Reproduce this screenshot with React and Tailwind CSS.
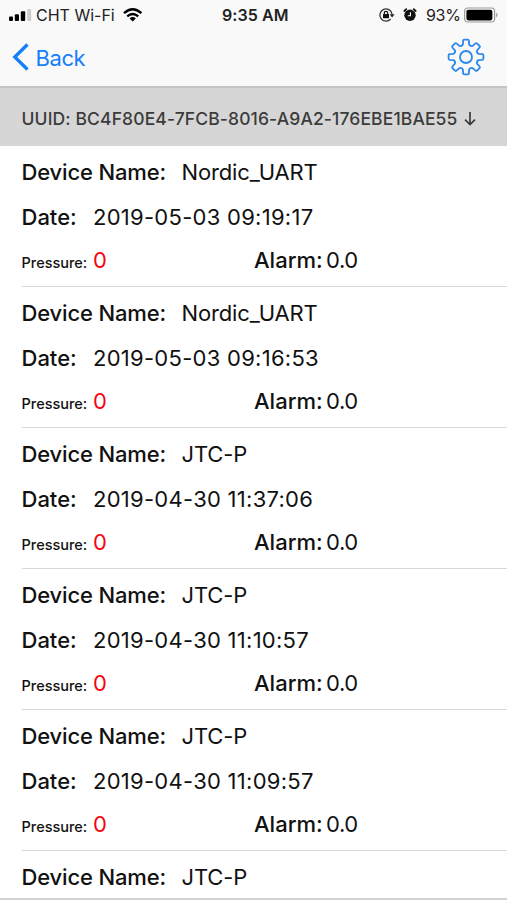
const records = [
  { id: 1, name: 'Nordic_UART', date: '2019-05-03 09:19:17', pressure: '0', alarm: '0.0' },
  { id: 2, name: 'Nordic_UART', date: '2019-05-03 09:16:53', pressure: '0', alarm: '0.0' },
  { id: 3, name: 'JTC-P', date: '2019-04-30 11:37:06', pressure: '0', alarm: '0.0' },
  { id: 4, name: 'JTC-P', date: '2019-04-30 11:10:57', pressure: '0', alarm: '0.0' },
  { id: 5, name: 'JTC-P', date: '2019-04-30 11:09:57', pressure: '0', alarm: '0.0' },
];

// Outline of an eight-toothed cog centred on the origin.
function cogPath() {
  const point = (r, deg) => {
    const a = (deg * Math.PI) / 180;
    return `${(r * Math.sin(a)).toFixed(2)} ${(-r * Math.cos(a)).toFixed(2)}`;
  };
  let d = '';
  for (let i = 0; i < 8; i++) {
    const a = i * 45;
    d += `${i ? 'L' : 'M'}${point(12.9, a - 14)} L${point(16.6, a - 10)} Q${point(17.6, a - 9)} ${point(17.5, a - 6)} L${point(17.5, a + 6)} Q${point(17.6, a + 9)} ${point(16.6, a + 10)} L${point(12.9, a + 14)} Q${point(11.2, a + 22.5)} ${point(12.9, a + 31)} `;
  }
  return d + 'Z';
}

function StatusBar() {
  return (
    <div className="flex h-[30px] items-center pl-[9px] pr-[8px] text-[16px] leading-[30px] text-[#222]">
      <svg className="h-[14px] w-[23px] shrink-0" viewBox="0 0 23 14">
        <rect x="0" y="8.5" width="4" height="4.5" rx="1" fill="#000" />
        <rect x="5.8" y="6.3" width="4.2" height="6.7" rx="1" fill="#000" />
        <rect x="11.8" y="3.3" width="4.4" height="9.7" rx="1" fill="#000" />
        <rect x="18.3" y="1" width="3.9" height="12" rx="1" fill="#ccc" />
      </svg>
      <span className="ml-[4px] w-[80px] whitespace-nowrap">CHT Wi-Fi</span>
      <svg className="ml-[7px] h-[14px] w-[20px] shrink-0" viewBox="0 0 20 14">
        <g fill="none" stroke="#000" strokeWidth="2.4">
          <path d="M1 5.2Q9.7 -2.6 18.4 5.2" />
          <path d="M4.2 8.4Q9.7 3.6 15.2 8.4" />
        </g>
        <path d="M6.6 10.4Q9.7 7.8 12.8 10.4L9.7 13.6Z" fill="#000" />
      </svg>
      <span className="ml-[79px] w-[68px] whitespace-nowrap font-semibold tracking-[0.1px]">9:35 AM</span>
      <svg className="ml-auto h-[16px] w-[17px] shrink-0" viewBox="0 0 17 16">
        <path d="M12.6 12A6.1 6.1 0 1 1 14 7" fill="none" stroke="#333" strokeWidth="1.3" />
        <path d="M11.6 7.2H16.6L14.1 10.4Z" fill="#222" />
        <rect x="5" y="7" width="6" height="4.3" rx=".5" fill="#111" />
        <path d="M6.3 7.2V6a1.7 1.7 0 0 1 3.4 0V7.2" fill="none" stroke="#111" strokeWidth="1.2" />
      </svg>
      <svg className="ml-[8px] h-[16px] w-[14px] shrink-0" viewBox="0 0 14 16">
        <circle cx="7" cy="8.3" r="5.7" fill="#111" />
        <path d="M1.3 4 3.3 2.2M12.7 4 10.7 2.2" stroke="#111" strokeWidth="1.8" strokeLinecap="round" />
        <path d="M7.4 5.2V8.7H4.8" fill="none" stroke="#fff" strokeWidth="1.1" />
      </svg>
      <span className="ml-[9px] w-[35px] whitespace-nowrap tracking-[-0.3px]">93%</span>
      <svg className="ml-[2px] h-[18px] w-[36px] shrink-0" viewBox="0 0 36 18">
        <rect x="1.6" y="2" width="30" height="14" rx="3.2" fill="#fff" stroke="#999" strokeWidth="1.2" />
        <rect x="3.4" y="3.8" width="26" height="10.6" rx="1.8" fill="#000" />
        <path d="M33.2 6.5Q36 9 33.2 11.5Z" fill="#999" />
      </svg>
    </div>
  );
}

function NameLine({ name }) {
  return (
    <div className="flex whitespace-nowrap tracking-[-0.15px]">
      <span className="w-[160px] font-medium">Device Name:</span>
      <span>{name}</span>
    </div>
  );
}

function Record({ name, date, pressure, alarm }) {
  return (
    <li className="ml-[21.5px] h-[141px] border-b border-[#d8d8d8] pt-[12px] text-[22px] leading-[28px]">
      <NameLine name={name} />
      <div className="mt-[17px] flex whitespace-nowrap">
        <span className="w-[71.5px] font-medium">Date:</span>
        <span className="tracking-[0.27px]">{date}</span>
      </div>
      <div className="mt-[15px] flex items-baseline whitespace-nowrap">
        <span className="w-[71.5px] text-[14.5px] font-medium">Pressure:</span>
        <span className="w-[161px] text-[#f5050f]">{pressure}</span>
        <span className="w-[72px] font-medium">Alarm:</span>
        <span className="tracking-[-0.4px]">{alarm}</span>
      </div>
    </li>
  );
}

export default function App() {
  return (
    <div className="flex h-[900px] w-[507px] flex-col overflow-hidden bg-white font-['Inter','Liberation_Sans',sans-serif] text-[#111]">
      <header className="h-[88px] shrink-0 border-b-2 border-[#c4c4c4] bg-[#f9f9f9]">
        <StatusBar />
        <div className="flex h-[54px] items-center justify-between pl-[12px] pr-[22px]">
          <button className="flex items-center text-[#147efb]">
            <svg className="h-[30px] w-[19px]" viewBox="0 0 19 30">
              <path d="M15.5 2.5 2.8 15 15.5 27.5" fill="none" stroke="currentColor" strokeWidth="3.3" />
            </svg>
            <span className="ml-[4.5px] pt-px text-[22px] leading-[30px] tracking-[-0.4px]">Back</span>
          </button>
          <button className="text-[#2b88ee]">
            <svg className="h-[38px] w-[38px]" viewBox="-19 -19 38 38" fill="none" stroke="currentColor" strokeWidth="1.8" strokeLinejoin="round">
              <path d={cogPath()} />
              <circle r="6" />
            </svg>
          </button>
        </div>
      </header>
      <div className="flex h-[58px] shrink-0 items-center whitespace-nowrap bg-[#d6d6d6] pl-[21.5px] pt-[4px] text-[17.5px] font-medium text-[#3b3b3b]">
        <span className="w-[442px] tracking-[0.12px]">UUID: BC4F80E4-7FCB-8016-A9A2-176EBE1BAE55</span>
        <svg className="h-[14px] w-[12px]" viewBox="0 0 12 14" fill="none" stroke="currentColor" strokeWidth="1.7">
          <path d="M6 0V12.3M1 7.6 6 12.5 11 7.6" />
        </svg>
      </div>
      <ul className="h-[752px] shrink-0">
        {records.map((record) => (
          <Record key={record.id} {...record} />
        ))}
        <li className="ml-[21.5px] pt-[12px] text-[22px] leading-[28px]">
          <NameLine name="JTC-P" />
        </li>
      </ul>
      <div className="h-[2px] shrink-0 bg-[#d2d2d2]" />
    </div>
  );
}
